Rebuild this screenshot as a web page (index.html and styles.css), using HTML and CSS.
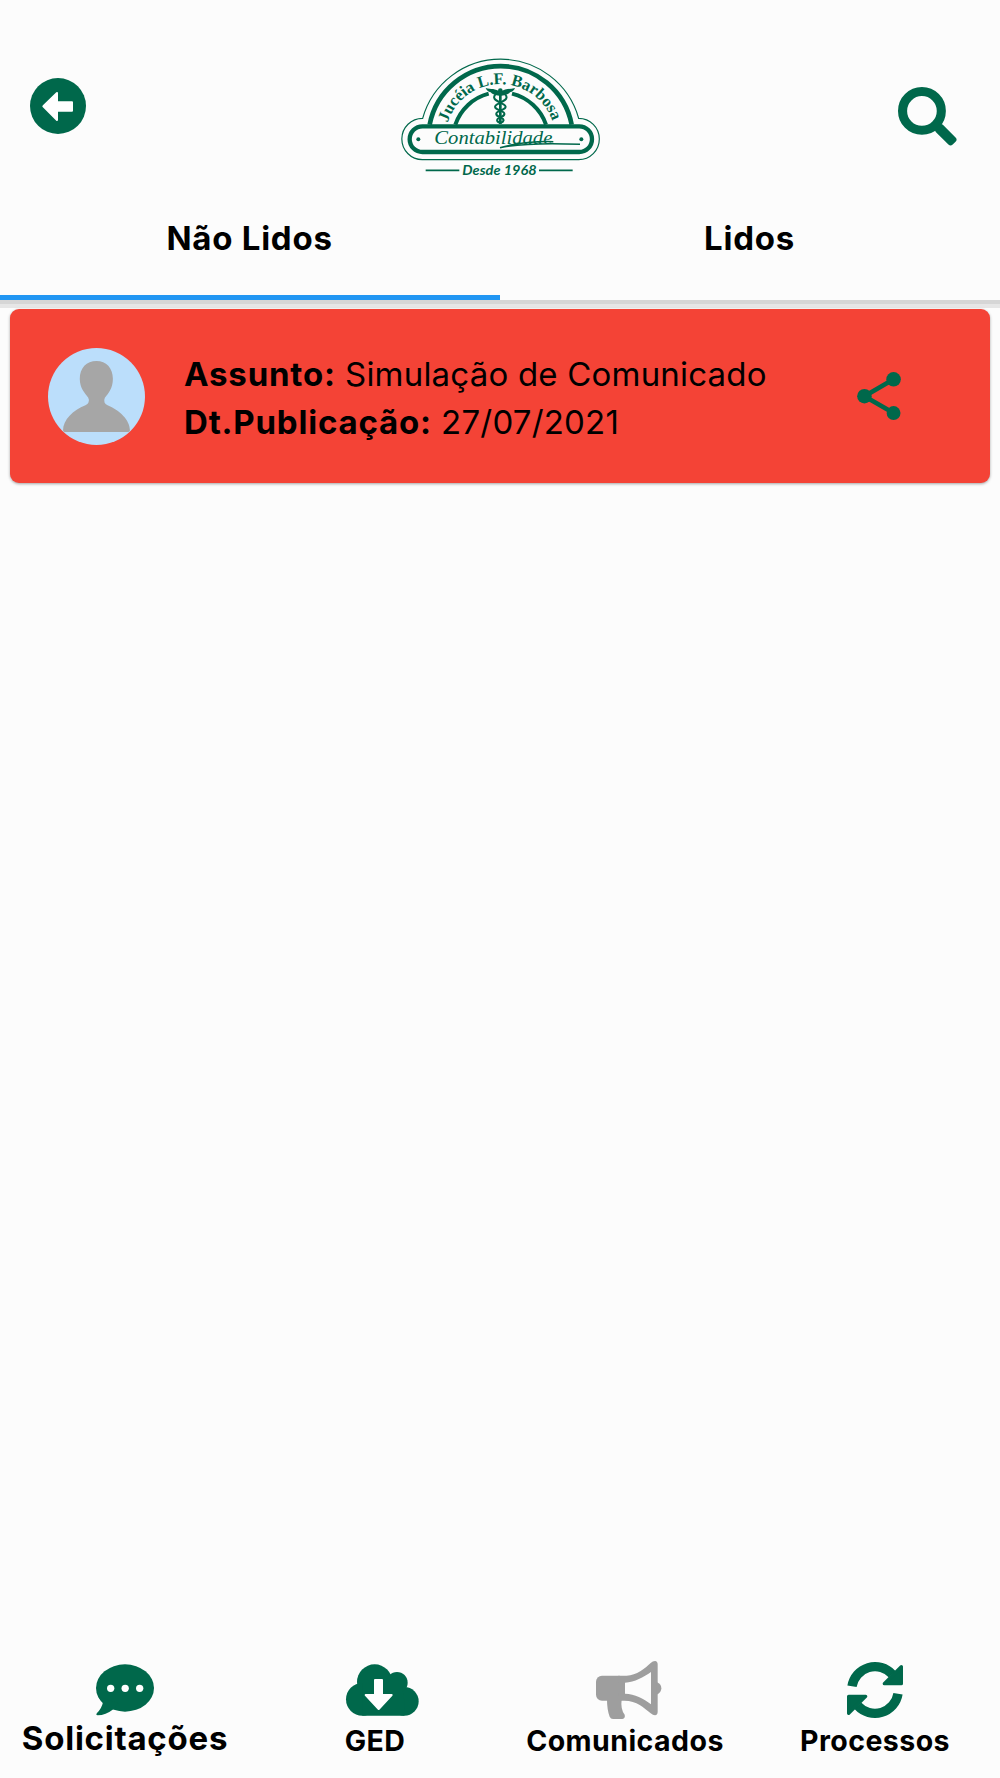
FILE: index.html
```html
<!DOCTYPE html>
<html lang="pt-BR">
<head>
  <meta charset="UTF-8" />
  <meta name="viewport" content="width=device-width, initial-scale=1.0"/>
  <title>Comunicados</title>
  <link rel="stylesheet" href="styles.css">
</head>
<body>
  <header class="header">
    <div class="topbar">
      <svg class="back" viewBox="0 0 168 168">
        <circle cx="84" cy="84" r="84" fill="#00684b"/>
        <path d="M40 85 L81 45 V73 H126 V98 H81 V126 Z" fill="#fff" stroke="#fff" stroke-width="6" stroke-linejoin="round"/>
      </svg>

      <svg class="logo" viewBox="0 0 660 405">
        <g fill="none" stroke="#00684b">
          <path d="M97 329 A62 62 0 0 1 98 205 A243 243 0 0 1 566 205 A62 62 0 0 1 566 329 Z" stroke-width="3.5"/>
          <path d="M119 224 A217 217 0 0 1 545 224" stroke-width="14"/>
          <path d="M196 224 A144 144 0 0 1 296 131 M366 131 A144 144 0 0 1 468 224" stroke-width="12"/>
          <rect x="59" y="229" width="547" height="77" rx="38.5" stroke-width="13"/>
          <path d="M107 361 H208 M447 361 H548" stroke-width="5"/>
          <path d="M330 293 C380 278 450 273 490 275 M330 293 C400 279 500 280 570 283" stroke-width="4.5"/>
          <!-- caduceu -->
          <path d="M331 122 V222" stroke-width="8"/>
          <path d="M322 128 C300 145 320 152 335 160 C356 170 346 176 330 182 C312 190 318 197 331 202 C345 208 343 214 331 219" stroke-width="6"/>
          <path d="M340 128 C362 145 342 152 327 160 C306 170 316 176 332 182 C350 190 344 197 331 202 C317 208 319 214 331 219" stroke-width="6"/>
        </g>
        <g fill="#00684b">
          <circle cx="85" cy="268" r="6"/>
          <circle cx="574" cy="268" r="6"/>
          <circle cx="331" cy="122" r="7"/>
          <path d="M331 137 C318 138 306 133 302 127 C295 125 289 121 287 114 C303 118 316 115 331 126 C346 115 359 118 375 114 C373 121 367 125 360 127 C356 133 344 138 331 137 Z"/>
          <path id="arco" d="M170 228 A166 166 0 0 1 492 228" fill="none"/>
          <text class="logo-name"><textPath href="#arco" startOffset="10" textLength="414">Jucéia L.F. Barbosa</textPath></text>
          <text class="logo-script" x="133" y="283" textLength="354" lengthAdjust="spacingAndGlyphs">Contabilidade</text>
          <text class="logo-since" x="217" y="374" textLength="223" lengthAdjust="spacingAndGlyphs">Desde 1968</text>
        </g>
      </svg>

      <svg class="search" viewBox="0 0 175 175">
        <circle cx="71" cy="71" r="57.5" fill="none" stroke="#00684b" stroke-width="27"/>
        <rect x="136" y="56" width="70" height="30" rx="9" transform="rotate(45 71 71)" fill="#00684b"/>
      </svg>
    </div>

    <div class="tabs">
      <div class="tab active"><span>Não Lidos</span></div>
      <div class="tab"><span>Lidos</span></div>
    </div>
  </header>

  <main class="list">
    <div class="card">
      <svg class="avatar" viewBox="0 0 290 290">
        <circle cx="145" cy="145" r="145" fill="#bbdefb"/>
        <path fill="#a6a6a6" d="M145 39 C115 39 95 60 95 92 C95 120 110 135 120 148 Q124 154 121 163 Q119 168 112 171 C75 185 45 215 45 246 Q45 251 50 251 H240 Q245 251 245 246 C245 215 213 185 178 171 Q171 168 169 163 Q167 155 170 149 C181 135 194 120 194 92 C194 60 174 39 145 39 Z"/>
      </svg>
      <div class="info">
        <div class="row"><b>Assunto:</b> <span>Simulação de Comunicado</span></div>
        <div class="row"><b>Dt.Publicação:</b> <span>27/07/2021</span></div>
      </div>
      <svg class="share" viewBox="0 0 132 145">
        <path d="M110 22 L22 73 L110 124" fill="none" stroke="#00684b" stroke-width="14"/>
        <g fill="#00684b">
          <circle cx="110" cy="22" r="22"/>
          <circle cx="22" cy="73" r="22"/>
          <circle cx="110" cy="124" r="21"/>
        </g>
      </svg>
    </div>
  </main>

  <nav class="menu">
    <div class="item big">
      <svg viewBox="0 0 240 180">
        <g fill="#00684b">
          <ellipse cx="120" cy="84" rx="87" ry="71"/>
          <path d="M40 110 Q48 123 54 127 Q50 146 36 159 Q31 165 38 166 Q62 166 85 148 L100 130 Z"/>
        </g>
        <g fill="#fff">
          <circle cx="77" cy="85" r="11"/>
          <circle cx="120.500" cy="85" r="11"/>
          <circle cx="164" cy="85" r="11"/>
        </g>
      </svg>
      <span>Solicitações</span>
    </div>
    <div class="item">
      <svg viewBox="0 0 240 180">
        <g fill="#00684b">
          <circle cx="82" cy="118" r="49"/>
          <circle cx="208" cy="124" r="43"/>
          <circle cx="119" cy="66" r="53"/>
          <circle cx="186" cy="68" r="32"/>
          <path d="M82 70 H200 L208 124 V167 H82 Z"/>
        </g>
        <path d="M120 60 H141 V105 H170 L131 147 L92 105 H120 Z" fill="#fff" stroke="#fff" stroke-width="6" stroke-linejoin="round"/>
      </svg>
      <span>GED</span>
    </div>
    <div class="item">
      <svg viewBox="0 0 240 180">
        <g fill="#9e9e9e">
          <rect x="33" y="47" width="87" height="75" rx="18"/>
          <path d="M66 118 Q66 150 74 170 Q77 177 84 177 H112 Q122 174 119 164 Q106 148 110 118 Z"/>
          <path fill-rule="evenodd" d="M100 47 H125 C155 46 180 25 197 9 Q203 3 210 3 Q218 4 218 13 V155 Q218 165 210 166 Q204 166 197 160 C178 144 155 122 118 122 H100 Z M120 68 C150 66 175 52 198 36 V133 C175 115 150 102 120 101 Z"/>
          <path d="M215 66 Q229 72 229 85 Q229 98 215 104 Z"/>
        </g>
      </svg>
      <span>Comunicados</span>
    </div>
    <div class="item">
      <svg viewBox="0 0 240 180">
        <g id="seta">
          <path d="M51 79 A70 70 0 0 1 172 43" fill="none" stroke="#00684b" stroke-width="28"/>
          <path d="M199 20 V71 H148 Z" fill="#00684b" stroke="#00684b" stroke-width="10" stroke-linejoin="round"/>
        </g>
        <use href="#seta" transform="rotate(180 120 90)"/>
      </svg>
      <span>Processos</span>
    </div>
  </nav>
</body>
</html>
```

FILE: styles.css
```css
* {
  box-sizing: border-box;
}
body {
  margin: 0;
  height: 1778px;
  display: flex;
  flex-direction: column;
  background: #fcfcfc;
  color: #000;
  font-family: Inter, "Liberation Sans", sans-serif;
  font-size: 33px;
}
svg {
  display: block;
  flex: none;
  overflow: visible;
}
.header {
  height: 300px;
  display: flex;
  flex-direction: column;
  box-shadow: 0 4px #d6d6d6, 0 8px #e6e6e6;
}
.topbar {
  display: flex;
  justify-content: space-between;
  align-items: flex-start;
  height: 185px;
  padding: 50px 43px 0 30px;
}
.back {
  width: 56px;
  height: 56px;
  margin-top: 28px;
}
.logo {
  width: 220px;
  height: 135px;
  margin-left: 16px;
}
.search {
  width: 59px;
  height: 59px;
  margin-top: 37px;
}
.logo-name {
  font-family: "Liberation Serif", serif;
  font-weight: bold;
  font-size: 49px;
}
.logo-script {
  font-family: "Liberation Serif", serif;
  font-style: italic;
  font-size: 56px;
}
.logo-since {
  font-family: Lato, sans-serif;
  font-style: italic;
  font-weight: bold;
  font-size: 38px;
}
.tabs {
  flex: 1;
  display: flex;
}
.tab {
  flex: 1;
  display: flex;
  justify-content: center;
  padding: 33px 1px 0 0;
  line-height: 40px;
  font-weight: 700;
  letter-spacing: 0.75px;
  border-bottom: 5px solid transparent;
}
.tab.active {
  border-color: #2196f3;
}
.list {
  flex: 1;
  padding: 9px 10px;
}
.card {
  display: flex;
  align-items: center;
  height: 174px;
  padding: 0 89px 0 38px;
  background: #f44336;
  border-radius: 9px;
  box-shadow: 0 1px 3px rgba(0,0,0,0.35);
}
.avatar {
  width: 97px;
  height: 97px;
}
.info {
  flex: 1;
  padding-left: 39px;
  padding-top: 4px;
}
.row {
  line-height: 48px;
  white-space: nowrap;
}
.row b {
  font-weight: 700;
  letter-spacing: 0.8px;
}
.row span {
  letter-spacing: 0.2px;
}
.share {
  width: 44px;
  height: 48px;
}
.menu {
  display: flex;
  height: 118px;
}
.item {
  width: 250px;
  display: flex;
  flex-direction: column;
  align-items: center;
  font-size: 28.5px;
  font-weight: 700;
  line-height: 40px;
  letter-spacing: 0.45px;
}
.item svg {
  width: 80px;
  height: 60px;
}
.item span {
  margin-top: 1px;
}
.big {
  font-size: 33px;
  letter-spacing: 0.75px;
}
.big span {
  margin-top: -2px;
}
```
